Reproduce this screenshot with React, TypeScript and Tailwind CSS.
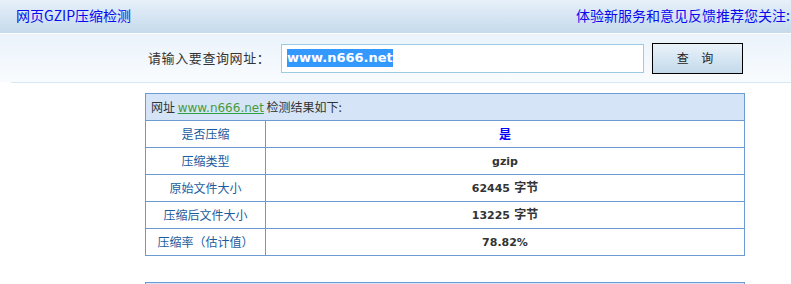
import React from "react";

const cjk = { fontFamily: '"DejaVu Sans", "Noto Sans CJK SC", sans-serif' };

const rows: { label: string; num: string; unit?: string; blue?: boolean }[] = [
  { label: "是否压缩", num: "", unit: "是", blue: true },
  { label: "压缩类型", num: "gzip" },
  { label: "原始文件大小", num: "62445", unit: "字节" },
  { label: "压缩后文件大小", num: "13225", unit: "字节" },
  { label: "压缩率（估计值）", num: "78.82%" },
];

export default function App() {
  return (
    <div className="w-[791px] h-[284px] overflow-hidden bg-white" style={cjk}>
      <div className="w-[890px]">
        {/* header */}
        <div className="h-[33px] flex items-center bg-gradient-to-b from-[#e7f0f9] to-[#c5daec] text-[14px] text-[#0a0af0] whitespace-nowrap" style={{ fontFamily: '"Noto Sans CJK SC", sans-serif' }}>
          <div className="w-[576px] pl-[16px] pb-[2px]">网页GZIP压缩检测</div>
          <div className="pb-[2px]">体验新服务和意见反馈推荐您关注:</div>
        </div>
        <div className="h-px bg-white" />
        {/* search area */}
        <div className="h-[48px] bg-gradient-to-b from-[#eaf3fb] to-[#f9fcfe]">
          <div className="w-[600px] mx-auto h-full flex items-center">
            <div className="ml-[3px] w-[117px] text-[13px] text-[#333] whitespace-nowrap tracking-[0.6px]" style={{ fontFamily: '"Noto Sans CJK SC", sans-serif' }}>
              请输入要查询网址：
            </div>
            <div className="ml-[16px] w-[363px] h-[29px] border border-[#9ccbe2] bg-white flex items-center pl-[5px]">
              <span className="bg-[#3399ff] text-white font-bold text-[13px] leading-[18px]" style={{ fontFamily: '"DejaVu Sans", sans-serif' }}>
                www.n666.net
              </span>
            </div>
            <div className="ml-[8px] w-[91px] h-[31px] border border-black bg-gradient-to-b from-[#eaf3fa] to-[#c3d9eb] flex items-center justify-center text-[12px] text-[#222] tracking-[5px]" style={{ fontFamily: '"Noto Sans CJK SC", sans-serif' }}>
              查 询
            </div>
          </div>
        </div>
        <div className="mx-[11px] h-px bg-[#d6e8f3]" />
        <div className="h-[10px]" />
        {/* results table */}
        <div className="w-[600px] mx-auto">
          <table className="w-full border-collapse text-[12px]">
            <tbody>
              <tr className="h-[27px] bg-[#d5e5f7]">
                <td colSpan={2} className="border border-[#6b9bd2] pl-[5px] text-[#333]" style={{ fontFamily: '"Noto Sans CJK SC", sans-serif' }}>
                  网址{" "}
                  <span className="text-[#4a9a3c] underline decoration-[#2ea043]" style={{ fontFamily: '"DejaVu Sans", sans-serif' }}>
                    www.n666.net
                  </span>{" "}
                  检测结果如下:
                </td>
              </tr>
              {rows.map((r) => (
                <tr key={r.label} className="h-[27px]">
                  <td className="w-[120px] border border-[#6b9bd2] text-center text-[#1b5c9e]" style={{ fontFamily: '"Noto Sans CJK SC", sans-serif' }}>
                    {r.label}
                  </td>
                  <td className={`border border-[#6b9bd2] text-center font-bold ${r.blue ? "text-[#0000ff]" : "text-[#333]"}`}>
                    {r.num && (
                      <span className="text-[11px]" style={{ fontFamily: '"DejaVu Sans", sans-serif' }}>
                        {r.num}
                      </span>
                    )}
                    {r.num && r.unit ? " " : null}
                    {r.unit && (
                      <span className="text-[12px]" style={{ fontFamily: '"Noto Sans CJK SC", sans-serif' }}>
                        {r.unit}
                      </span>
                    )}
                  </td>
                </tr>
              ))}
            </tbody>
          </table>
          <div className="h-[26px]" />
          <div className="h-[30px] border border-[#6b9bd2] bg-[#d5e5f7]" />
        </div>
      </div>
    </div>
  );
}
